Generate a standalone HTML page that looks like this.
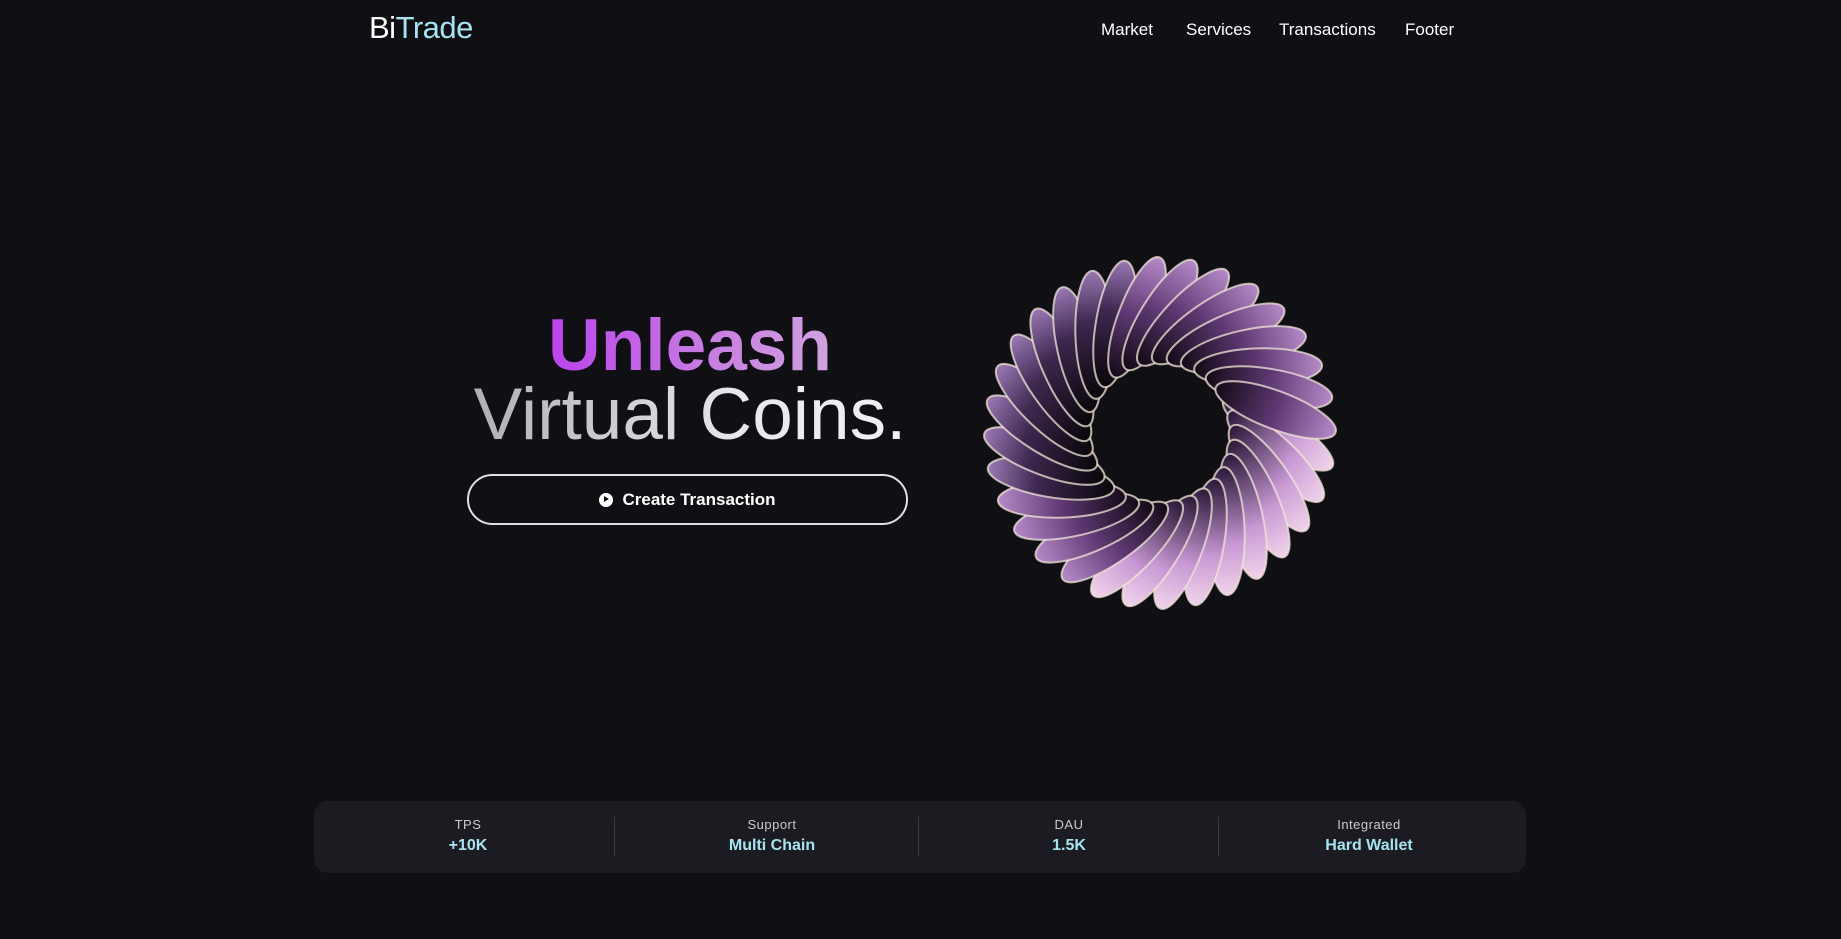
<!DOCTYPE html>
<html><head><meta charset="utf-8"><style>
*{margin:0;padding:0;box-sizing:border-box}
body{width:1841px;height:939px;background:#0f0f14;font-family:"Liberation Sans",sans-serif;color:#fff;position:relative;overflow:hidden}
.logo{position:absolute;left:369px;top:10px;font-size:31px;letter-spacing:-0.5px}
.logo span{color:#a6e3f0}
nav{position:absolute;top:20px;left:1101px;font-size:17px;display:flex;gap:0}
nav a{color:#fff;text-decoration:none;position:absolute;white-space:nowrap}
h1{position:absolute;left:440px;width:500px;text-align:center;font-weight:bold;font-size:73px;top:306px;line-height:80px;background:linear-gradient(90deg,#b31cf5,#c87fe0 55%,#d9c3e0);-webkit-background-clip:text;background-clip:text;color:transparent}
h2{position:absolute;left:440px;width:500px;text-align:center;font-weight:normal;font-size:73px;top:375px;line-height:80px;background:linear-gradient(90deg,#a9a9ad,#e8e8ea 60%,#f4f4f6);-webkit-background-clip:text;background-clip:text;color:transparent}
.btn{position:absolute;left:467px;top:474px;width:441px;height:51px;border:2px solid #e0e0e4;border-radius:26px;display:flex;align-items:center;justify-content:center;font-weight:bold;font-size:17px}
.btn i{display:inline-block;width:14px;height:14px;border-radius:50%;background:#fff;margin-right:9px;position:relative}
.btn i:after{content:"";position:absolute;left:5px;top:3.5px;border-left:5px solid #111;border-top:3.5px solid transparent;border-bottom:3.5px solid transparent}
.stats{position:absolute;left:314px;top:801px;width:1212px;height:72px;background:#1b1b21;border-radius:14px}
.st{position:absolute;top:16px;text-align:center;width:240px;margin-left:-120px}
.st .l{font-size:13px;color:#ccc;letter-spacing:0.5px}
.st .v{font-size:16px;font-weight:bold;color:#a6e3f0;margin-top:5px}
.dv{position:absolute;top:16px;width:1px;height:40px;background:#3a3a42}
</style></head><body>
<div class="logo">Bi<span>Trade</span></div>
<nav><a style="left:0">Market</a><a style="left:85px">Services</a><a style="left:178px">Transactions</a><a style="left:304px">Footer</a></nav>
<h1>Unleash</h1>
<h2>Virtual Coins.</h2>
<div class="btn"><i></i>Create Transaction</div>
<svg id="ring" style="position:absolute;left:960px;top:240px" width="400" height="390" viewBox="0 0 400 390">
<defs>
<linearGradient id="g1" x1="0" y1="0" x2="1" y2="0"><stop offset="0" stop-color="#120a16"/><stop offset=".5" stop-color="#5e3872"/><stop offset="1" stop-color="#b58ac8"/></linearGradient>
<linearGradient id="g2" x1="0" y1="0" x2="1" y2="0"><stop offset="0" stop-color="#2a1838"/><stop offset=".6" stop-color="#c898d4"/><stop offset="1" stop-color="#f0d4ea"/></linearGradient>
<linearGradient id="g3" x1="0" y1="0" x2="1" y2="0"><stop offset="0" stop-color="#08060a"/><stop offset=".6" stop-color="#3e2850"/><stop offset="1" stop-color="#9a78b4"/></linearGradient>
</defs>
<g id="petals"></g>
</svg>
<script>
(function(){var g=document.getElementById('petals'),cx=200,cy=193,s='';var N=32;
for(var i=0;i<N;i++){var a=i/N*360;var r=118;var rad=a*Math.PI/180;var x=cx+r*Math.cos(rad),y=cy+r*Math.sin(rad);
var gr=(a>-10&&a<110)?'g2':(a>150&&a<250?'g3':'g1');
s+='<ellipse cx="'+x.toFixed(1)+'" cy="'+y.toFixed(1)+'" rx="64" ry="19" transform="rotate('+(a+32)+' '+x.toFixed(1)+' '+y.toFixed(1)+')" fill="url(#'+gr+')" stroke="#f2e6d8" stroke-width="2" stroke-opacity=".75"/>';}
g.innerHTML=s;})();
</script>
<div class="stats">
<div class="st" style="left:154px"><div class="l">TPS</div><div class="v">+10K</div></div>
<div class="dv" style="left:300px"></div>
<div class="st" style="left:458px"><div class="l">Support</div><div class="v">Multi Chain</div></div>
<div class="dv" style="left:604px"></div>
<div class="st" style="left:755px"><div class="l">DAU</div><div class="v">1.5K</div></div>
<div class="dv" style="left:904px"></div>
<div class="st" style="left:1055px"><div class="l">Integrated</div><div class="v">Hard Wallet</div></div>
</div>
</body></html>
